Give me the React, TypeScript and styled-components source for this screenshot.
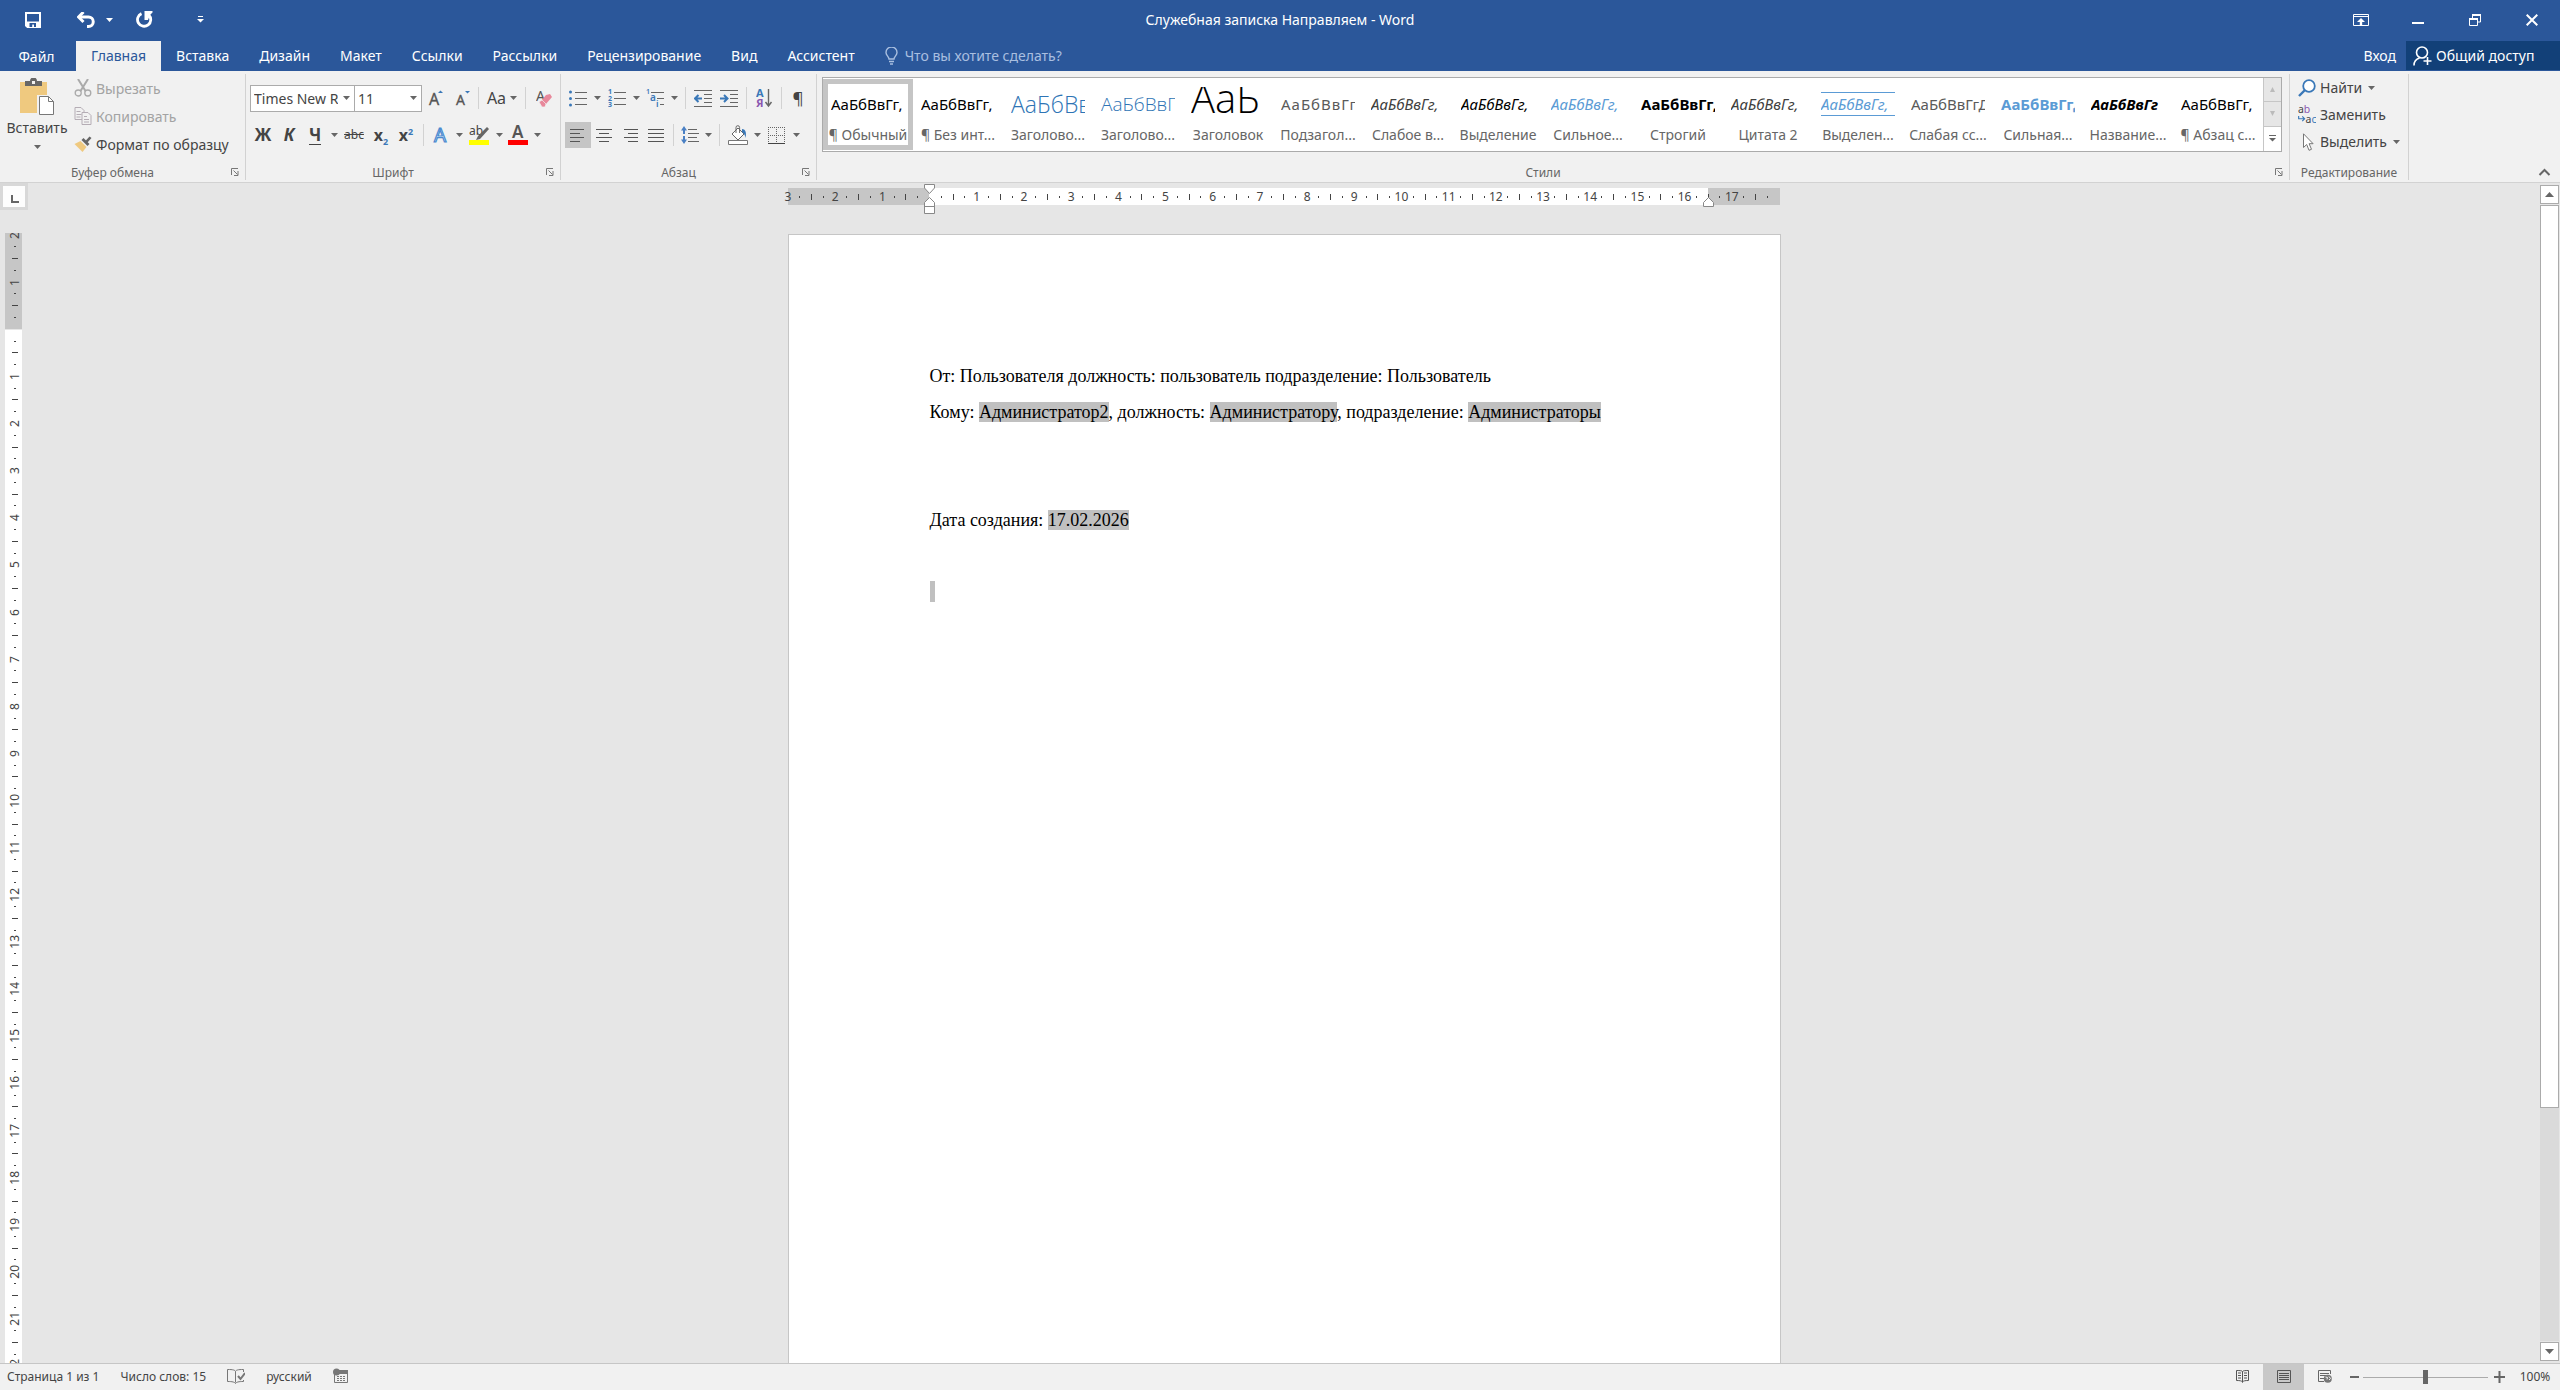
import React from "react";
import styled, { createGlobalStyle, css } from "styled-components";

const ui = `"Noto Sans", "Open Sans", sans-serif`;

const Global = createGlobalStyle`
  * { box-sizing: border-box; }
  body { margin: 0; font-family: ${ui}; color: #444; overflow: hidden; }
  button, input, select { font: inherit; color: inherit; }
`;

const App = styled.div`
  display: flex;
  flex-direction: column;
  height: 100vh;
  background: #e6e6e6;
`;

const bare = css`
  border: 0;
  padding: 0;
  margin: 0;
  background: transparent;
  display: flex;
  align-items: center;
  justify-content: center;
  white-space: nowrap;
`;

/* ---------- title bar ---------- */
const TitleBar = styled.header`
  display: grid;
  grid-template-columns: 1fr auto 1fr;
  align-items: center;
  height: 41px;
  flex: none;
  padding-bottom: 2px;
  background: #2b579a;
  color: #fff;
`;
const QuickAccess = styled.div`
  display: flex;
  padding-left: 16px;
`;
const QuickButton = styled.button<{ $w: number; $gap?: number }>`
  ${bare}
  width: ${(p) => p.$w}px;
  margin-left: ${(p) => p.$gap ?? 0}px;
  height: 36px;
`;
const Title = styled.h1`
  margin: 0;
  font-size: 14px;
  line-height: 20px;
  font-weight: 400;
`;
const WindowButtons = styled.div`
  display: flex;
  justify-content: flex-end;
`;
const WindowButton = styled.button`
  ${bare}
  width: 57px;
  height: 38px;
`;

/* ---------- tab strip ---------- */
const TabStrip = styled.nav`
  display: flex;
  height: 30px;
  flex: none;
  background: #2b579a;
  color: #fff;
  font-size: 14px;
`;
const Tabs = styled.div`
  display: flex;
`;
const Tab = styled.button<{ $active?: boolean }>`
  ${bare}
  padding: 0 15px 1px;
  background: ${(p) => (p.$active ? "#f1f1f1" : "transparent")};
  color: ${(p) => (p.$active ? "#2b579a" : "#fff")};
  &:first-child { width: 76px; padding: 0 21px 0 18px; }
`;
const TellMe = styled.label`
  display: flex;
  align-items: center;
  gap: 7px;
  flex: 1;
  padding: 0 0 1px 15px;
  color: #a9bfe0;
  input {
    width: 240px;
    border: 0;
    padding: 0;
    background: transparent;
    outline: none;
  }
  input::placeholder { color: #a9bfe0; opacity: 1; }
`;
const SignIn = styled.a`
  display: flex;
  align-items: center;
  padding: 0 10px 1px;
  color: #fff;
  text-decoration: none;
`;
const Share = styled.button`
  ${bare}
  width: 154px;
  height: 29px;
  gap: 4px;
  justify-content: flex-start;
  padding-left: 7px;
  background: #124078;
  color: #fff;
`;

/* ---------- ribbon ---------- */
const Ribbon = styled.section`
  display: flex;
  height: 112px;
  flex: none;
  padding: 3px 0 2px;
  background: #f1f1f1;
  border-bottom: 1px solid #d2d2d2;
`;
const Group = styled.section<{ $w?: number }>`
  display: flex;
  flex-direction: column;
  justify-content: space-between;
  ${(p) => (p.$w ? `width: ${p.$w}px; flex: none;` : "flex: 1; min-width: 0;")}
  border-right: 1px solid #d2d2d2;
`;
const GroupFoot = styled.footer`
  display: flex;
  align-items: center;
  height: 16px;
  font-size: 12px;
  text-align: center;
  white-space: nowrap;
  color: #666;
  > span { flex: 1; }
`;
const Launcher = styled.button`
  ${bare}
  width: 20px;
  height: 16px;
`;
const ClipboardBody = styled.div`
  display: flex;
`;
const PasteButton = styled.button`
  ${bare}
  flex-direction: column;
  width: 74px;
  justify-content: flex-start;
  padding-top: 4px;
  font-size: 14px;
  line-height: 24px;
  svg + span { margin-bottom: 5px; }
`;
const Stack = styled.div<{ $row: number }>`
  display: grid;
  grid-auto-rows: ${(p) => p.$row}px;
`;
const LabelButton = styled.button<{ $iconW: number }>`
  ${bare}
  justify-content: flex-start;
  font-size: 14px;
  &:disabled { color: #a3a3a3; }
  > svg:first-child { width: ${(p) => p.$iconW}px; margin-right: 4px; }
  > span + svg { margin-left: 6px; }
`;
const ToolRows = styled.div`
  display: grid;
  gap: 11px;
  padding: 11px 0 0 4px;
`;
const ToolRow = styled.div`
  display: flex;
  align-items: center;
  height: 26px;
`;
const Tool = styled.button<{ $w?: number; $on?: boolean }>`
  ${bare}
  width: ${(p) => p.$w ?? 26}px;
  height: 26px;
  font-size: 16px;
  gap: 4px;
  background: ${(p) => (p.$on ? "#c5c5c5" : "transparent")};
`;
const Rule = styled.span<{ $w: number }>`
  width: ${(p) => p.$w}px;
  height: 22px;
  display: flex;
  justify-content: center;
  &::before { content: ""; width: 1px; background: #d2d2d2; }
`;
const ComboBox = styled.span<{ $w: number }>`
  position: relative;
  width: ${(p) => p.$w}px;
  height: 27px;
  margin-right: ${(p) => (p.$w > 100 ? -1 : 0)}px;
  select {
    width: 100%;
    height: 100%;
    appearance: none;
    border: 1px solid #ababab;
    border-radius: 0;
    background: #fff;
    padding: 0 16px 0 3px;
    font-size: 14px;
    color: #444;
    overflow: hidden;
  }
  svg {
    position: absolute;
    right: 5px;
    top: 11px;
    pointer-events: none;
  }
`;
const Glyph = styled.span<{ $bold?: boolean; $italic?: boolean; $under?: boolean; $strike?: boolean; $size?: number }>`
  font-size: ${(p) => p.$size ?? 16}px;
  line-height: 18px;
  font-weight: ${(p) => (p.$bold ? 700 : 400)};
  font-style: ${(p) => (p.$italic ? "italic" : "normal")};
  text-decoration: ${(p) => (p.$strike ? "line-through" : "none")};
  border-bottom: ${(p) => (p.$under ? "1px solid #444" : "0")};
  sub, sup { font-size: 9px; line-height: 0; color: #3a78b8; }
`;

/* ---------- style gallery ---------- */
const GalleryWrap = styled.div`
  padding: 3px 7px 0 5px;
`;
const Gallery = styled.div`
  display: flex;
  height: 75px;
  border: 1px solid #ababab;
  background: #fff;
`;
const Cards = styled.div`
  display: flex;
  flex: 1;
  min-width: 0;
  overflow: hidden;
  padding: 1px 0;
`;
const Card = styled.button<{ $on?: boolean }>`
  ${bare}
  width: 90px;
  min-width: 0;
  flex: none;
  flex-direction: column;
  align-items: stretch;
  justify-content: flex-start;
  border: 5px solid ${(p) => (p.$on ? "#c5c5c5" : "transparent")};
`;
const Sample = styled.span<{ $s?: string }>`
  display: block;
  height: 38px;
  min-width: 0;
  margin: 3px 3px 0;
  overflow: hidden;
  text-align: left;
  font-size: 15px;
  line-height: 34px;
  color: #000;
  ${(p) => p.$s ?? ""}
`;
const CardName = styled.span`
  font-size: 14px;
  line-height: 20px;
  text-align: center;
  color: #666;
`;
const GalleryNav = styled.div`
  display: grid;
  grid-template-rows: 1fr 1fr 1fr;
  width: 18px;
  flex: none;
  border-left: 1px solid #c6c6c6;
  button { ${bare} }
  button:disabled { background: #e6e6e6; border-bottom: 1px solid #c6c6c6; }
`;
const EditingBody = styled.div`
  padding-left: 8px;
`;
const RibbonTail = styled.div`
  display: flex;
  width: 151px;
  align-items: flex-end;
  justify-content: flex-end;
  padding-right: 6px;
`;

/* ---------- workspace ---------- */
const Workspace = styled.main`
  display: grid;
  grid-template-columns: 28px 1fr 20px;
  flex: 1;
  min-height: 0;
  overflow: hidden;
`;
const LeftRail = styled.div`
  display: flex;
  flex-direction: column;
  align-items: flex-start;
  min-height: 0;
  overflow: hidden;
`;
const TabSelector = styled.button`
  ${bare}
  width: 28px;
  height: 27px;
  flex: none;
  border: 3px solid #d8d8d8;
  background: #fdfdfd;
  padding: 4px 0 0 2px;
`;
const VRuler = styled.div`
  display: flex;
  flex: 1;
  min-height: 0;
  width: 17px;
  margin: 23px 0 0 5px;
  padding-top: 2px;
  overflow: hidden;
  background: linear-gradient(#c6c6c6 96px, #e6e6e6 96px, #e6e6e6 97px, #fff 97px);
`;
const VMarks = styled.div`
  display: flex;
  flex-direction: column;
  justify-content: space-between;
  flex: none;
  width: 17px;
  height: 1320px;
`;
const VMark = styled.span`
  display: flex;
  align-items: center;
  justify-content: center;
  height: 0;
  padding-left: 3px;
  font-size: 12px;
  b { font-weight: 400; writing-mode: vertical-rl; transform: rotate(180deg); line-height: 14px; }
`;
const Tick = styled.i<{ $w: number; $h: number }>`
  flex: none;
  width: ${(p) => p.$w}px;
  height: ${(p) => p.$h}px;
  background: #444;
`;
const Canvas = styled.div`
  display: flex;
  flex-direction: column;
  align-items: center;
  min-height: 0;
  overflow: hidden;
`;
const HRuler = styled.div`
  position: relative;
  display: flex;
  justify-content: space-between;
  flex: none;
  width: 992px;
  height: 17px;
  margin: 5px 0 29px;
  background: linear-gradient(90deg, #c6c6c6 141px, #fff 141px, #fff 920px, #c6c6c6 920px);
`;
const HMark = styled.span`
  display: flex;
  align-items: center;
  justify-content: center;
  width: 0;
  font-size: 12px;
  line-height: 17px;
`;
const Indent = styled.span<{ $x: number; $y: number }>`
  position: absolute;
  left: ${(p) => p.$x}px;
  top: ${(p) => p.$y}px;
  display: flex;
`;
const Page = styled.article`
  flex: 1;
  width: 993px;
  padding: 123px 140px 0 141px;
  border: 1px solid #c6c6c6;
  border-bottom: 0;
  background: #fff;
  font-family: "Liberation Serif", "Times New Roman", serif;
  font-size: 18px;
  line-height: 36px;
  color: #000;
  p { margin: 0; height: 36px; white-space: nowrap; }
  mark { background: #c0c0c0; color: inherit; }
`;
const EmptyField = styled.mark`
  display: inline-block;
  width: 5px;
  height: 21px;
  vertical-align: -4px;
`;
const ScrollBar = styled.div`
  display: flex;
  flex-direction: column;
  padding: 2px 1px 2px 0;
  gap: 1px;
  background: #e6e6e6;
`;
const ScrollButton = styled.button`
  ${bare}
  height: 19px;
  flex: none;
  border: 1px solid #ababab;
  background: #fff;
`;
const Track = styled.div`
  flex: 1;
  background: #dadada;
`;
const Thumb = styled.div`
  height: calc(80% - 6px);
  border: 1px solid #ababab;
  background: #fff;
`;

/* ---------- status bar ---------- */
const StatusBar = styled.footer`
  display: flex;
  align-items: stretch;
  justify-content: space-between;
  height: 27px;
  flex: none;
  border-top: 1px solid #c6c6c6;
  background: #f1f1f1;
  font-size: 12px;
`;
const StatusLeft = styled.div`
  display: flex;
  gap: 21px;
  padding: 0 0 2px 7px;
  button { ${bare} }
`;
const StatusRight = styled.div`
  display: flex;
  align-items: stretch;
`;
const View = styled.button<{ $on?: boolean }>`
  ${bare}
  width: 41px;
  padding-bottom: 2px;
  background: ${(p) => (p.$on ? "#c8c8c8" : "transparent")};
`;
const ZoomStep = styled.button<{ $w: number }>`
  ${bare}
  width: ${(p) => p.$w}px;
`;
const ZoomRange = styled.input`
  appearance: none;
  width: 125px;
  margin: 0;
  background: linear-gradient(#ababab, #ababab) center / 100% 1px no-repeat;
  &::-webkit-slider-thumb {
    appearance: none;
    width: 5px;
    height: 14px;
    background: #666;
  }
`;
const ZoomValue = styled.button`
  ${bare}
  width: 50px;
  padding-bottom: 2px;
`;

/* ---------- icons ---------- */
type SvgProps = { w: number; h: number; children: React.ReactNode };
const Svg = ({ w, h, children }: SvgProps) => (
  <svg width={w} height={h} viewBox={`0 0 ${w} ${h}`} fill="none" aria-hidden="true">{children}</svg>
);
const Caret = ({ color = "#666" }) => (
  <Svg w={7} h={4}><path d="M0 0h7L3.500 4z" fill={color} /></Svg>
);
const SaveIcon = () => (
  <Svg w={16} h={16}>
    <path d="M1 1h14v14H2.500L1 13.500z" stroke="#fff" strokeWidth="2" />
    <path d="M1 9.500h14V15H1z" fill="#fff" />
    <path d="M4.500 11h6.500v4H9v-2.500H7.200V15H4.500z" fill="#2b579a" />
  </Svg>
);
const UndoIcon = () => (
  <Svg w={18} h={16}>
    <path d="M2 5h9.500a4.300 4.300 0 0 1 0 9.500H10" stroke="#fff" strokeWidth="3" />
    <path d="M6.500 0 1.500 5l5 5" stroke="#fff" strokeWidth="3" />
  </Svg>
);
const RedoIcon = () => (
  <Svg w={17} h={17}>
    <path d="M5.500 2.600A6.600 6.600 0 1 0 12.800 4" stroke="#fff" strokeWidth="2.800" />
    <path d="M8.500 0h8v1.500L14 4l-2 5H8.500z" fill="#fff" />
  </Svg>
);
const CustomizeIcon = () => (
  <Svg w={7} h={7}><path d="M1 0.500h5" stroke="#fff" /><path d="M0 3h7L3.500 6.500z" fill="#fff" /></Svg>
);
const RibbonOptionsIcon = () => (
  <Svg w={16} h={12}>
    <path d="M.5.5h15v11H.5zM.5 2.500h15" stroke="#fff" />
    <path d="M8 4 4 8h2.800v3h2.400V8H12z" fill="#fff" />
  </Svg>
);
const MinimizeIcon = () => <Svg w={12} h={10}><path d="M0 8h12" stroke="#fff" strokeWidth="2" /></Svg>;
const RestoreIcon = () => (
  <Svg w={12} h={12}>
    <path d="M.5 4.500h8v7h-8zM3.500 4V1h8v7H9" stroke="#fff" />
    <path d="M3 1h9M0 5h9" stroke="#fff" strokeWidth="2" />
  </Svg>
);
const CloseIcon = () => <Svg w={12} h={12}><path d="m.7.7 10.600 10.600M11.300.7.7 11.300" stroke="#fff" strokeWidth="2" /></Svg>;
const BulbIcon = () => (
  <Svg w={13} h={18}>
    <path d="M4 12c0-2.500-3-3.500-3-6.500a5.500 5.500 0 0 1 11 0c0 3-3 4-3 6.500zM4 14.500h5M5 17h3" stroke="#a9bfe0" strokeWidth="1.400" />
  </Svg>
);
const PersonIcon = () => (
  <Svg w={19} h={20}>
    <circle cx="9" cy="6.500" r="5.500" stroke="#fff" strokeWidth="1.600" />
    <path d="M1 19.500c0-4 2-6.500 5.500-7.500M14.500 11v8M10.500 15h8" stroke="#fff" strokeWidth="1.600" />
  </Svg>
);
const PasteIcon = () => (
  <Svg w={36} h={38}>
    <path d="M1 4h27v31H1z" fill="#efc97f" />
    <path d="M6 3h5a3 3 0 0 1 7 0h5v5H6z" fill="#666" />
    <path d="M13 3h3v3h-3z" fill="#f1f1f1" />
    <path d="M18 17h18v21H18z" fill="#f1f1f1" />
    <path d="M20.500 18.500h9l5 5v13h-14z" fill="#fff" stroke="#777" />
    <path d="M29.500 18.500v5h5" stroke="#777" />
  </Svg>
);
const CutIcon = () => (
  <Svg w={17} h={18}>
    <path d="M3.500 0 11 12M13.500 0 6 12" stroke="#aaa" strokeWidth="2" />
    <circle cx="3.700" cy="14" r="3" stroke="#aaa" strokeWidth="1.300" />
    <circle cx="13.300" cy="14" r="3" stroke="#aaa" strokeWidth="1.300" />
  </Svg>
);
const CopyIcon = () => (
  <Svg w={17} h={18}>
    <path d="M.5.5h6l3 3v9h-9zM2 4.500h4M2 7.500h5M2 10h4" stroke="#b5adb5" />
    <path d="M7.500 5.500h6l3 3v9h-9z" fill="#f1f1f1" stroke="#b5adb5" />
    <path d="M9.500 9.500h3M9.500 12.500h5M9.500 15h5" stroke="#b5adb5" />
  </Svg>
);
const PainterIcon = () => (
  <Svg w={17} h={16}>
    <path d="m0 8 6-3 6 6-4 5z" fill="#efc97f" />
    <path d="m7 4 2-2 6 6-2 2z" fill="#666" />
    <path d="m10 6 5-5.500L17 2l-4.500 5z" fill="#666" />
  </Svg>
);
const LauncherIcon = () => (
  <Svg w={8} h={8}>
    <path d="M.5 7V.5H7" stroke="#777" />
    <path d="m2.500 2.500 4 4M7 3v4.500H3" stroke="#777" />
  </Svg>
);
const GrowIcon = ({ down = false }) => (
  <Svg w={16} h={18}>
    <text x="1" y="16" fontSize={down ? 14 : 16} fontFamily={ui} fill="#555" stroke="#555" strokeWidth="0.3">A</text>
    <path d={down ? "M10 2h5l-2.500 2.500z" : "M10 4h5l-2.500-2.500z"} fill="#3a78b8" />
  </Svg>
);
const ClearIcon = () => (
  <Svg w={16} h={18}>
    <text x="0" y="12" fontSize="14" fontFamily={ui} fill="#555">A</text>
    <path d="m10 6 4-1 2 3-6 7-3-1-1-3z" fill="#e8889b" />
    <path d="m3 13 3-2 4 4-1 3H6z" fill="#e8889b" stroke="#f1f1f1" strokeWidth=".7" />
  </Svg>
);
const EffectsIcon = () => (
  <Svg w={16} h={18}>
    <text x="1" y="16" fontSize="19" fontFamily={ui} fill="#fff" stroke="#4a8ad0" strokeWidth="1.200">A</text>
  </Svg>
);
const HighlightIcon = () => (
  <Svg w={20} h={20}>
    <text x="0" y="10" fontSize="12" fontFamily={ui} fill="#444">ab</text>
    <path d="m18 2 2 2-9 10-4 1 2-4z" fill="#666" />
    <path d="M0 15h20v5H0z" fill="#ff0" />
  </Svg>
);
const FontColorIcon = () => (
  <Svg w={20} h={20}>
    <text x="4" y="13" fontSize="17" fontWeight="600" fontFamily={ui} fill="#555">A</text>
    <path d="M0 15h20v5H0z" fill="red" />
  </Svg>
);
const BulletsIcon = () => (
  <Svg w={18} h={18}>
    <path d="M6 3.500h12M6 9.500h12M6 15.500h12" stroke="#666" />
    <circle cx="1.500" cy="3" r="1.500" fill="#3a78b8" /><circle cx="1.500" cy="9.500" r="1.500" fill="#3a78b8" /><circle cx="1.500" cy="16" r="1.500" fill="#3a78b8" />
  </Svg>
);
const NumbersIcon = () => (
  <Svg w={18} h={18}>
    <path d="M6 3.500h12M6 9.500h12M6 15.500h12" stroke="#666" />
    <g fontSize="7" fontWeight="700" fontFamily={ui} fill="#3a78b8"><text x="0" y="5">1</text><text x="0" y="12">2</text><text x="0" y="18">3</text></g>
  </Svg>
);
const MultiIcon = () => (
  <Svg w={18} h={18}>
    <path d="M5 3.500h13M11 9.500h7M14 15.500h4" stroke="#666" />
    <g fontWeight="600" fontFamily={ui} fill="#3a78b8"><text x="0" y="5" fontSize="7">1</text><text x="4" y="12" fontSize="10">a</text><text x="10" y="18" fontSize="9">i</text></g>
  </Svg>
);
const IndentIcon = ({ right = false }) => (
  <Svg w={18} h={17}>
    <path d="M0 .5h18M10 4.500h8M10 8.500h8M10 12.500h8M0 16.500h18" stroke="#666" />
    <path d={right ? "M0 8.500h7M4 5l3.500 3.500L4 12" : "M1 8.500h7M4.500 5 1 8.500 4.500 12"} stroke="#3a78b8" strokeWidth="2" />
  </Svg>
);
const SortIcon = () => (
  <Svg w={17} h={20}>
    <g fontSize="11" fontWeight="700" fontFamily={ui}><text x="0" y="9" fill="#3a78b8">A</text><text x="0" y="19" fill="#8a56b0">Я</text></g>
    <path d="M12.500 1v17M9.500 14l3 4 3-4" stroke="#666" strokeWidth="1.400" />
  </Svg>
);
const AlignIcon = ({ kind }: { kind: "l" | "c" | "r" | "j" }) => {
  const widths = kind === "j" ? [16, 16, 16, 16] : kind === "c" ? [16, 10, 16, 10] : [14, 10, 14, 10];
  return (
    <Svg w={16} h={13}>
      {widths.map((n, i) => {
        const x = kind === "l" ? 0 : kind === "r" ? 16 - n : (16 - n) / 2;
        return <path key={i} d={`M${x} ${i * 4 + 0.5}h${n}`} stroke="#555" />;
      })}
    </Svg>
  );
};
const SpacingIcon = () => (
  <Svg w={18} h={18}>
    <path d="M7 3.500h9M7 7.500h11M7 11.500h9M7 15.500h11" stroke="#666" />
    <path d="M3 2v6M3 10v6" stroke="#4a80c4" strokeWidth="2" />
    <path d="M0 4.500 3 0l3 4.500zM0 13.500 3 18l3-4.500z" fill="#4a80c4" />
  </Svg>
);
const BucketIcon = () => (
  <Svg w={20} h={20}>
    <path d="m4 9 6-6 6 6-6 6z" fill="#fff" stroke="#666" />
    <path d="M8 8V2.500a1.800 1.800 0 0 1 3.600 0V8" stroke="#666" />
    <path d="M14 4c3 0 5 3 3.500 9-.5-3-1-4-3.500-6z" fill="#3a78b8" />
    <path d="M.5 15.500h19v4H.5z" fill="#fff" stroke="#777" />
  </Svg>
);
const BordersIcon = () => (
  <Svg w={17} h={17}>
    <path d="M.5 0v16M8.500 0v16M16.500 0v16M0 .5h17M0 8.500h17" stroke="#666" strokeDasharray="1 1" />
    <path d="M0 16.500h17" stroke="#444" />
  </Svg>
);
const FindIcon = () => (
  <Svg w={18} h={18}>
    <circle cx="11" cy="7" r="5.800" stroke="#3a78b8" strokeWidth="1.800" fill="#fff" />
    <path d="m7 11-6 6" stroke="#3a78b8" strokeWidth="2.400" />
  </Svg>
);
const ReplaceIcon = () => (
  <Svg w={19} h={19}>
    <g fontSize="11" fontFamily={ui} fill="#444">
      <text x="0" y="8">a<tspan fill="#8a56b0">b</tspan></text>
      <text x="8" y="18">a<tspan fill="#3a78b8">c</tspan></text>
    </g>
    <path d="M.7 11v3H7M4.500 11.500 7 14l-2.500 2.500" stroke="#3a78b8" strokeWidth="1.200" />
  </Svg>
);
const CursorIcon = () => (
  <Svg w={18} h={18}>
    <path d="M5.500.8v13.700l3.200-3 2.300 5.800 2.500-1-2.400-5.600h4z" fill="#fff" stroke="#777" />
  </Svg>
);
const ProofIcon = () => (
  <Svg w={18} h={15}>
    <path d="M8.500 2.500v11M8.500 2.500C8 1 6 .5.500.5v12c5 0 7 .5 8 2 1-1.500 3-2 8-2V11M8.500 2.500C9 1 11 .5 16.500.5V3" stroke="#777" />
    <path d="m11 7 2.500 3L18 4" stroke="#777" strokeWidth="2" />
  </Svg>
);
const MacroIcon = () => (
  <Svg w={15} h={16}>
    <path d="M1.500 3.500h13v11h-13z" stroke="#777" fill="#f1f1f1" />
    <path d="M2 2h13v4H2z" fill="#777" />
    <path d="M4 8.500h9M4 10.500h9M4 12.500h9" stroke="#777" strokeDasharray="2 1" />
    <circle cx="3.500" cy="4" r="3.500" fill="#777" />
  </Svg>
);
const ReadIcon = () => (
  <Svg w={13} h={13}>
    <path d="M6.500 1.500v11M6.500 1.500C6 .7 4 .5.500.5v10c3.500 0 5 .3 6 1.500 1-1.200 2.500-1.500 6-1.500V.5C9 .5 7 .7 6.500 1.500M2 3h3M2 5.500h3M2 8h3M8 3h3M8 5.500h3M8 8h3" stroke="#555" />
  </Svg>
);
const PrintIcon = () => (
  <Svg w={14} h={13}><path d="M.5.5h13v12H.5zM2 3.500h10M2 5.500h10M2 7.500h10M2 9.500h10" stroke="#555" /></Svg>
);
const WebIcon = () => (
  <Svg w={14} h={13}>
    <path d="M12.500 4V.5H.5v11H6M2 3.500h9M2 5.500h6M2 8.500h4" stroke="#666" />
    <circle cx="9.800" cy="8.800" r="4" fill="#777" />
    <path d="m7.500 7 2 .5-.5 2M11 6.500l1.500 2-1.500 1.500" stroke="#f1f1f1" />
  </Svg>
);
const TriUp = ({ color = "#666", w = 9 }) => (
  <Svg w={w} h={5}><path d={`M0 5h${w}L${w / 2} 0z`} fill={color} /></Svg>
);
const TriDown = ({ color = "#666", w = 9 }) => (
  <Svg w={w} h={5}><path d={`M0 0h${w}L${w / 2} 5z`} fill={color} /></Svg>
);
const MoreIcon = () => <Svg w={7} h={7}><path d="M0 .5h7" stroke="#666" /><path d="M0 3h7L3.500 6.500z" fill="#666" /></Svg>;
const TopIndent = () => <Svg w={11} h={10}><path d="M.5.5h10V4L5.500 9.500.5 4z" fill="#fff" stroke="#888" /></Svg>;
const LeftIndent = () => <Svg w={11} h={17}><path d="M.5 16.500h10V5.500L5.500.5l-5 5zM.5 9.500h10" fill="#fff" stroke="#888" /></Svg>;
const RightIndent = () => <Svg w={11} h={10}><path d="M.5 9.500h10V5.500L5.500.5l-5 5z" fill="#fff" stroke="#888" /></Svg>;

/* ---------- data ---------- */
const tabs = ["Файл", "Главная", "Вставка", "Дизайн", "Макет", "Ссылки", "Рассылки", "Рецензирование", "Вид", "Ассистент"];
const light = `font-family: "Open Sans", "Noto Sans", sans-serif; font-weight: 300;`;
const plain = "АаБбВвГг,";
const styles: { name: string; text: string; s?: string }[] = [
  { name: "¶ Обычный", text: plain },
  { name: "¶ Без инт...", text: plain },
  { name: "Заголово...", text: "АаБбВв", s: `${light} font-size: 23px; color: #2e74b5;` },
  { name: "Заголово...", text: "АаБбВвГ", s: `${light} font-size: 19px; color: #2e74b5;` },
  { name: "Заголовок", text: "АаБ", s: `${light} font-size: 40px; line-height: 21px;` },
  { name: "Подзагол...", text: "АаБбВвГг", s: "color: #5a5a5a; letter-spacing: 1px;" },
  { name: "Слабое в...", text: plain, s: "color: #404040; font-style: italic;" },
  { name: "Выделение", text: plain, s: "font-style: italic;" },
  { name: "Сильное...", text: plain, s: "color: #5b9bd5; font-style: italic;" },
  { name: "Строгий", text: plain, s: "font-weight: 700;" },
  { name: "Цитата 2", text: plain, s: "color: #404040; font-style: italic;" },
  { name: "Выделен...", text: plain, s: "color: #5b9bd5; font-style: italic; height: 24px; line-height: 22px; margin: 8px 3px 9px; border: 1px solid #5b9bd5; border-width: 1px 0;" },
  { name: "Слабая сс...", text: "АаБбВвГгД", s: "color: #5a5a5a; font-variant: small-caps;" },
  { name: "Сильная...", text: "АаБбВвГгД", s: "color: #5b9bd5; font-weight: 700; font-variant: small-caps;" },
  { name: "Название...", text: "АаБбВвГг", s: "font-weight: 700; font-style: italic;" },
  { name: "¶ Абзац с...", text: plain },
];

const quarters = (from: number, to: number) =>
  Array.from({ length: (to - from) * 4 + 1 }, (_, i) => from + i / 4);

const Foot = ({ children, launcher = true }: { children: string; launcher?: boolean }) => (
  <GroupFoot>
    <span>{children}</span>
    {launcher && <Launcher aria-label={`${children}: параметры`}><LauncherIcon /></Launcher>}
  </GroupFoot>
);
const CaretTool = () => <Tool $w={12} aria-label="Ещё"><Caret /></Tool>;

export default function WordWindow() {
  return (
    <App>
      <Global />
      <TitleBar>
        <QuickAccess>
          <QuickButton $w={34} aria-label="Сохранить"><SaveIcon /></QuickButton>
          <QuickButton $w={34} $gap={19} aria-label="Отменить"><UndoIcon /></QuickButton>
          <QuickButton $w={12} aria-label="Список отмены"><Caret color="#fff" /></QuickButton>
          <QuickButton $w={34} $gap={12} aria-label="Повторить"><RedoIcon /></QuickButton>
          <QuickButton $w={12} $gap={33} aria-label="Настройка панели"><CustomizeIcon /></QuickButton>
        </QuickAccess>
        <Title>Служебная записка Направляем - Word</Title>
        <WindowButtons>
          <WindowButton aria-label="Параметры ленты"><RibbonOptionsIcon /></WindowButton>
          <WindowButton aria-label="Свернуть"><MinimizeIcon /></WindowButton>
          <WindowButton aria-label="Восстановить"><RestoreIcon /></WindowButton>
          <WindowButton aria-label="Закрыть"><CloseIcon /></WindowButton>
        </WindowButtons>
      </TitleBar>

      <TabStrip>
        <Tabs>
          {tabs.map((t, i) => <Tab key={t} $active={i === 1}>{t}</Tab>)}
        </Tabs>
        <TellMe>
          <BulbIcon />
          <input type="text" aria-label="Помощник" placeholder="Что вы хотите сделать?" />
        </TellMe>
        <SignIn href="#">Вход</SignIn>
        <Share><PersonIcon />Общий доступ</Share>
      </TabStrip>

      <Ribbon>
        <Group $w={246}>
          <ClipboardBody>
            <PasteButton><PasteIcon /><span>Вставить</span><Caret /></PasteButton>
            <Stack $row={28}>
              <LabelButton $iconW={18} disabled><CutIcon /><span>Вырезать</span></LabelButton>
              <LabelButton $iconW={18} disabled><CopyIcon /><span>Копировать</span></LabelButton>
              <LabelButton $iconW={18}><PainterIcon /><span>Формат по образцу</span></LabelButton>
            </Stack>
          </ClipboardBody>
          <Foot>Буфер обмена</Foot>
        </Group>

        <Group $w={315}>
          <ToolRows>
            <ToolRow>
              <ComboBox $w={105}>
                <select aria-label="Шрифт"><option>Times New Roman</option></select><Caret />
              </ComboBox>
              <ComboBox $w={68}>
                <select aria-label="Размер шрифта"><option>11</option></select><Caret />
              </ComboBox>
              <Tool $w={28} aria-label="Увеличить размер"><GrowIcon /></Tool>
              <Tool $w={25} aria-label="Уменьшить размер"><GrowIcon down /></Tool>
              <Rule $w={7} />
              <Tool $w={40}><Glyph>Aa</Glyph><Caret /></Tool>
              <Rule $w={7} />
              <Tool $w={30} aria-label="Удалить форматирование"><ClearIcon /></Tool>
            </ToolRow>
            <ToolRow>
              <Tool><Glyph $bold $size={17}>Ж</Glyph></Tool>
              <Tool><Glyph $bold $italic $size={17}>К</Glyph></Tool>
              <Tool><Glyph $bold $under $size={17}>Ч</Glyph></Tool>
              <CaretTool />
              <Tool $w={28}><Glyph $strike $size={12}>abc</Glyph></Tool>
              <Tool><Glyph $bold>x<sub>2</sub></Glyph></Tool>
              <Tool $w={24}><Glyph $bold>x<sup>2</sup></Glyph></Tool>
              <Rule $w={11} />
              <Tool $w={24} aria-label="Текстовые эффекты"><EffectsIcon /></Tool>
              <CaretTool />
              <Tool $w={28} aria-label="Цвет выделения"><HighlightIcon /></Tool>
              <CaretTool />
              <Tool aria-label="Цвет текста"><FontColorIcon /></Tool>
              <CaretTool />
            </ToolRow>
          </ToolRows>
          <Foot>Шрифт</Foot>
        </Group>

        <Group $w={256}>
          <ToolRows>
            <ToolRow>
              <Tool aria-label="Маркеры"><BulletsIcon /></Tool><CaretTool />
              <Tool $w={27} aria-label="Нумерация"><NumbersIcon /></Tool><CaretTool />
              <Tool aria-label="Многоуровневый список"><MultiIcon /></Tool><CaretTool />
              <Rule $w={10} />
              <Tool aria-label="Уменьшить отступ"><IndentIcon /></Tool>
              <Tool aria-label="Увеличить отступ"><IndentIcon right /></Tool>
              <Rule $w={8} />
              <Tool $w={28} aria-label="Сортировка"><SortIcon /></Tool>
              <Rule $w={7} />
              <Tool><Glyph $size={17}>¶</Glyph></Tool>
            </ToolRow>
            <ToolRow>
              <Tool $on aria-label="По левому краю"><AlignIcon kind="l" /></Tool>
              <Tool aria-label="По центру"><AlignIcon kind="c" /></Tool>
              <Tool aria-label="По правому краю"><AlignIcon kind="r" /></Tool>
              <Tool aria-label="По ширине"><AlignIcon kind="j" /></Tool>
              <Rule $w={9} />
              <Tool $w={24} aria-label="Интервал"><SpacingIcon /></Tool><CaretTool />
              <Rule $w={11} />
              <Tool aria-label="Заливка"><BucketIcon /></Tool><CaretTool />
              <Tool $w={27} aria-label="Границы"><BordersIcon /></Tool><CaretTool />
            </ToolRow>
          </ToolRows>
          <Foot>Абзац</Foot>
        </Group>

        <Group>
          <GalleryWrap>
            <Gallery>
              <Cards>
                {styles.map((c, i) => (
                  <Card key={i} $on={i === 0}>
                    <Sample $s={c.s}>{c.text}</Sample>
                    <CardName>{c.name}</CardName>
                  </Card>
                ))}
              </Cards>
              <GalleryNav>
                <button disabled aria-label="Вверх"><TriUp w={5} color="#bbb" /></button>
                <button disabled aria-label="Вниз"><TriDown w={5} color="#bbb" /></button>
                <button aria-label="Все стили"><MoreIcon /></button>
              </GalleryNav>
            </Gallery>
          </GalleryWrap>
          <Foot>Стили</Foot>
        </Group>

        <Group $w={119}>
          <EditingBody>
            <Stack $row={27}>
              <LabelButton $iconW={18}><FindIcon /><span>Найти</span><Caret /></LabelButton>
              <LabelButton $iconW={18}><ReplaceIcon /><span>Заменить</span></LabelButton>
              <LabelButton $iconW={18}><CursorIcon /><span>Выделить</span><Caret /></LabelButton>
            </Stack>
          </EditingBody>
          <Foot launcher={false}>Редактирование</Foot>
        </Group>
        <RibbonTail>
          <Launcher aria-label="Свернуть ленту"><Svg w={13} h={8}><path d="m1.500 7 5-5 5 5" stroke="#666" strokeWidth="2" /></Svg></Launcher>
        </RibbonTail>
      </Ribbon>

      <Workspace>
        <LeftRail>
          <TabSelector aria-label="Табуляция"><Svg w={9} h={9}><path d="M1 1v7h7" stroke="#666" strokeWidth="2" /></Svg></TabSelector>
          <VRuler>
            <VMarks>
              {quarters(-2, 26).map((q) => (
                <VMark key={q}>
                  {q === 0 ? null : q % 1 === 0 ? <b>{Math.abs(q)}</b> : q % 0.5 === 0 ? <Tick $w={6} $h={1} /> : <Tick $w={2} $h={1} />}
                </VMark>
              ))}
            </VMarks>
          </VRuler>
        </LeftRail>
        <Canvas>
          <HRuler>
            {quarters(-3, 18).map((q) => (
              <HMark key={q}>
                {q === 0 || q === 18 ? null : q % 1 === 0 ? Math.abs(q) : q % 0.5 === 0 ? <Tick $w={1} $h={6} /> : <Tick $w={1} $h={2} />}
              </HMark>
            ))}
            <Indent $x={136} $y={-4}><TopIndent /></Indent>
            <Indent $x={136} $y={9}><LeftIndent /></Indent>
            <Indent $x={915} $y={9}><RightIndent /></Indent>
          </HRuler>
          <Page>
            <p>От: Пользователя должность: пользователь подразделение: Пользователь</p>
            <p>Кому: <mark>Администратор2</mark>, должность: <mark>Администратору</mark>, подразделение: <mark>Администраторы</mark></p>
            <p />
            <p />
            <p>Дата создания: <mark>17.02.2026</mark></p>
            <p />
            <p><EmptyField /></p>
          </Page>
        </Canvas>
        <ScrollBar>
          <ScrollButton aria-label="Прокрутить вверх"><TriUp /></ScrollButton>
          <Track><Thumb /></Track>
          <ScrollButton aria-label="Прокрутить вниз"><TriDown /></ScrollButton>
        </ScrollBar>
      </Workspace>

      <StatusBar>
        <StatusLeft>
          <button>Страница 1 из 1</button>
          <button>Число слов: 15</button>
          <button aria-label="Правописание"><ProofIcon /></button>
          <button>русский</button>
          <button aria-label="Запись макроса"><MacroIcon /></button>
        </StatusLeft>
        <StatusRight>
          <View aria-label="Режим чтения"><ReadIcon /></View>
          <View $on aria-label="Разметка страницы"><PrintIcon /></View>
          <View aria-label="Веб-документ"><WebIcon /></View>
          <ZoomStep $w={18} aria-label="Уменьшить"><Svg w={9} h={2}><path d="M0 1h9" stroke="#666" strokeWidth="2" /></Svg></ZoomStep>
          <ZoomRange type="range" aria-label="Масштаб" min={0} max={200} defaultValue={100} />
          <ZoomStep $w={22} aria-label="Увеличить"><Svg w={11} h={12}><path d="M0 6h11M5.500 0v12" stroke="#666" strokeWidth="2" /></Svg></ZoomStep>
          <ZoomValue>100%</ZoomValue>
        </StatusRight>
      </StatusBar>
    </App>
  );
}
